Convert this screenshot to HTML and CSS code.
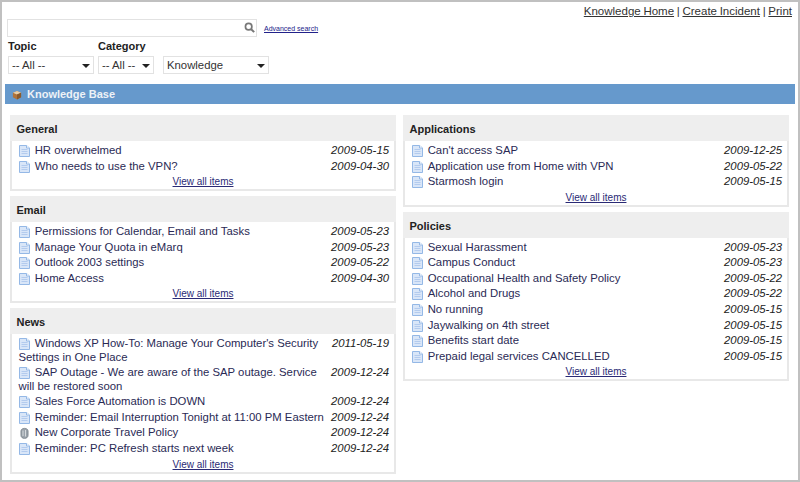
FILE: index.html
```html
<!DOCTYPE html>
<html>
<head>
<meta charset="utf-8">
<title>Knowledge Base</title>
<link rel="stylesheet" href="styles.css">
</head>
<body>
<svg class="defs" width="0" height="0">
  <symbol id="doc" viewBox="0 0 11 12">
    <path d="M.5.5H7.5L10.500 3V11.500H.5Z" fill="#d9e6f8" stroke="#94b8e6"/>
    <path d="M7.500.5V3H10.500" fill="#fff" stroke="#94b8e6"/>
    <path d="M2.500 4.500H8.500M2.500 6.500H8.500M2.500 8.500H8.500" stroke="#b3cbee"/>
  </symbol>
  <symbol id="clip" viewBox="0 0 11 12">
    <path d="M2 4C2 .5 9 .5 9 4V8.500C9 12.300 2 12.300 2 8.500Z" fill="#9aa2aa" stroke="#7f8890"/>
    <path d="M4 3.500V9M6.500 3V9.500" stroke="#d6dadd"/>
  </symbol>
</svg>
<div class="frame">
  <div class="toplinks"><a href="#">Knowledge Home</a> | <a href="#">Create Incident</a> | <a href="#">Print</a></div>
  <div class="searchrow">
    <div class="searchbox">
      <svg class="glass" width="11" height="11" viewBox="0 0 13 13"><circle cx="5.500" cy="5.500" r="3.800" fill="none" stroke="#777" stroke-width="2"/><path d="M8.500 8.500L12 12" stroke="#777" stroke-width="2.400"/></svg>
    </div>
    <a class="advanced" href="#">Advanced search</a>
  </div>
  <div class="filters">
    <div class="filter">
      <label class="flabel">Topic</label>
      <div class="select w-topic"><span>-- All --</span><i class="arrow"></i></div>
    </div>
    <div class="filter">
      <label class="flabel">Category</label>
      <div class="select w-cat"><span>-- All --</span><i class="arrow"></i></div>
    </div>
    <div class="filter f-kind">
      <div class="select w-kind"><span>Knowledge</span><i class="arrow"></i></div>
    </div>
  </div>
  <div class="banner">
    <svg class="cube" width="10" height="10" viewBox="0 0 11 11"><path d="M5.500 1L10 3V8L5.500 10.500L1 8V3Z" fill="#b0733a"/><path d="M5.500 1L10 3L5.500 5L1 3Z" fill="#e8cfa8"/><path d="M5.500 5V10.500L10 8V3Z" fill="#8a5a2c"/></svg>
    <span>Knowledge Base</span>
  </div>
  <div class="columns">
    <div class="column">
      <section class="panel">
        <h2>General</h2>
        <ul>
          <li><em>2009-05-15</em><svg class="ico"><use href="#doc"/></svg><a href="#">HR overwhelmed</a></li>
          <li><em>2009-04-30</em><svg class="ico"><use href="#doc"/></svg><a href="#">Who needs to use the VPN?</a></li>
        </ul>
        <a class="all" href="#">View all items</a>
      </section>
      <section class="panel">
        <h2>Email</h2>
        <ul>
          <li><em>2009-05-23</em><svg class="ico"><use href="#doc"/></svg><a href="#">Permissions for Calendar, Email and Tasks</a></li>
          <li><em>2009-05-23</em><svg class="ico"><use href="#doc"/></svg><a href="#">Manage Your Quota in eMarq</a></li>
          <li><em>2009-05-22</em><svg class="ico"><use href="#doc"/></svg><a href="#">Outlook 2003 settings</a></li>
          <li><em>2009-04-30</em><svg class="ico"><use href="#doc"/></svg><a href="#">Home Access</a></li>
        </ul>
        <a class="all" href="#">View all items</a>
      </section>
      <section class="panel">
        <h2>News</h2>
        <ul>
          <li><em>2011-05-19</em><svg class="ico"><use href="#doc"/></svg><a href="#">Windows XP How-To: Manage Your Computer's Security Settings in One Place</a></li>
          <li><em>2009-12-24</em><svg class="ico"><use href="#doc"/></svg><a href="#">SAP Outage - We are aware of the SAP outage. Service will be restored soon</a></li>
          <li><em>2009-12-24</em><svg class="ico"><use href="#doc"/></svg><a href="#">Sales Force Automation is DOWN</a></li>
          <li><em>2009-12-24</em><svg class="ico"><use href="#doc"/></svg><a href="#">Reminder: Email Interruption Tonight at 11:00 PM Eastern</a></li>
          <li><em>2009-12-24</em><svg class="ico"><use href="#clip"/></svg><a href="#">New Corporate Travel Policy</a></li>
          <li><em>2009-12-24</em><svg class="ico"><use href="#doc"/></svg><a href="#">Reminder: PC Refresh starts next week</a></li>
        </ul>
        <a class="all" href="#">View all items</a>
      </section>
    </div>
    <div class="column">
      <section class="panel">
        <h2>Applications</h2>
        <ul>
          <li><em>2009-12-25</em><svg class="ico"><use href="#doc"/></svg><a href="#">Can't access SAP</a></li>
          <li><em>2009-05-22</em><svg class="ico"><use href="#doc"/></svg><a href="#">Application use from Home with VPN</a></li>
          <li><em>2009-05-15</em><svg class="ico"><use href="#doc"/></svg><a href="#">Starmosh login</a></li>
        </ul>
        <a class="all" href="#">View all items</a>
      </section>
      <section class="panel">
        <h2>Policies</h2>
        <ul>
          <li><em>2009-05-23</em><svg class="ico"><use href="#doc"/></svg><a href="#">Sexual Harassment</a></li>
          <li><em>2009-05-23</em><svg class="ico"><use href="#doc"/></svg><a href="#">Campus Conduct</a></li>
          <li><em>2009-05-22</em><svg class="ico"><use href="#doc"/></svg><a href="#">Occupational Health and Safety Policy</a></li>
          <li><em>2009-05-22</em><svg class="ico"><use href="#doc"/></svg><a href="#">Alcohol and Drugs</a></li>
          <li><em>2009-05-15</em><svg class="ico"><use href="#doc"/></svg><a href="#">No running</a></li>
          <li><em>2009-05-15</em><svg class="ico"><use href="#doc"/></svg><a href="#">Jaywalking on 4th street</a></li>
          <li><em>2009-05-15</em><svg class="ico"><use href="#doc"/></svg><a href="#">Benefits start date</a></li>
          <li><em>2009-05-15</em><svg class="ico"><use href="#doc"/></svg><a href="#">Prepaid legal services CANCELLED</a></li>
        </ul>
        <a class="all" href="#">View all items</a>
      </section>
    </div>
  </div>
</div>
</body>
</html>
```
FILE: styles.css
```css
* { box-sizing: border-box; }
html, body { margin: 0; padding: 0; }
body { width: 800px; height: 482px; overflow: hidden; background: #fff; font-family: "Liberation Sans", Arial, sans-serif; font-size: 11.33px; color: #222; }
.defs { position: absolute; }
.frame { width: 800px; height: 482px; border: 2px solid #c0c0c0; padding: 0 3px; overflow: hidden; }
a { color: #2a2a55; text-decoration: underline; }
.toplinks { height: 17px; text-align: right; padding: 2px 3px 0 0; font-size: 11.5px; line-height: 14px; word-spacing: -.5px; color: #333; }
.toplinks a { color: #333; }
.searchrow { display: flex; align-items: center; height: 18px; padding-left: 2px; gap: 7px; }
.searchbox { width: 250px; height: 18px; border: 1px solid #e2e2e2; position: relative; background: #fff; }
.glass { position: absolute; right: 1px; top: 2px; }
.advanced { font-size: 7px; color: #22228a; margin-top: 1px; }
.filters { display: flex; padding-left: 3px; gap: 4px; }
.filter { display: flex; flex-direction: column; }
.flabel { font-weight: bold; font-size: 11px; line-height: 18px; height: 19px; color: #222; }
.f-kind { justify-content: flex-end; margin-left: 5px; }
.select { height: 18px; border: 1px solid #e2e2e2; display: flex; align-items: center; justify-content: space-between; padding: 0 3px 0 3px; font-size: 11.33px; color: #333; background: #fff; }
.w-topic { width: 86px; }
.w-cat { width: 56px; }
.w-kind { width: 106px; }
.arrow { width: 0; height: 0; border: solid transparent; border-width: 4px 4px 0 4px; border-top-color: #222; margin-top: 1px; }
.banner { display: flex; align-items: center; height: 19.5px; margin: 10px 0 0 0; padding-left: 7px; gap: 5px; background: #6699cc; color: #eef2f7; font-weight: bold; font-size: 11px; }
.cube { margin-top: 2px; }
.columns { display: flex; gap: 7px; padding: 11.8px 6px 0 5px; }
.column { width: 386px; display: flex; flex-direction: column; gap: 5px; }
.panel { border: 2px solid #e8e8e8; border-top-width: 0; background: #fff; padding-bottom: 1px; }
.panel h2 { margin: 0 -2px; height: 26px; line-height: 28px; padding-left: 6.500px; background: #eeeeee; font-size: 11px; font-weight: bold; color: #222; }
.panel ul { list-style: none; margin: 0; padding: 2.800px 0 0 6.500px; }
.panel li { padding: 0 5px 2.200px 0; line-height: 13.400px; font-size: 11.33px; display: flow-root; }
.panel li a { color: #2a2a55; text-decoration: none; }
.panel li em { float: right; margin-left: 6px; color: #222; }
.ico { width: 11px; height: 12px; margin: -2px 4.700px -2px .5px; vertical-align: -1px; }
.all { display: block; text-align: center; font-size: 10px; line-height: 12px; margin-top: 1px; color: #2a2a75; }
```
